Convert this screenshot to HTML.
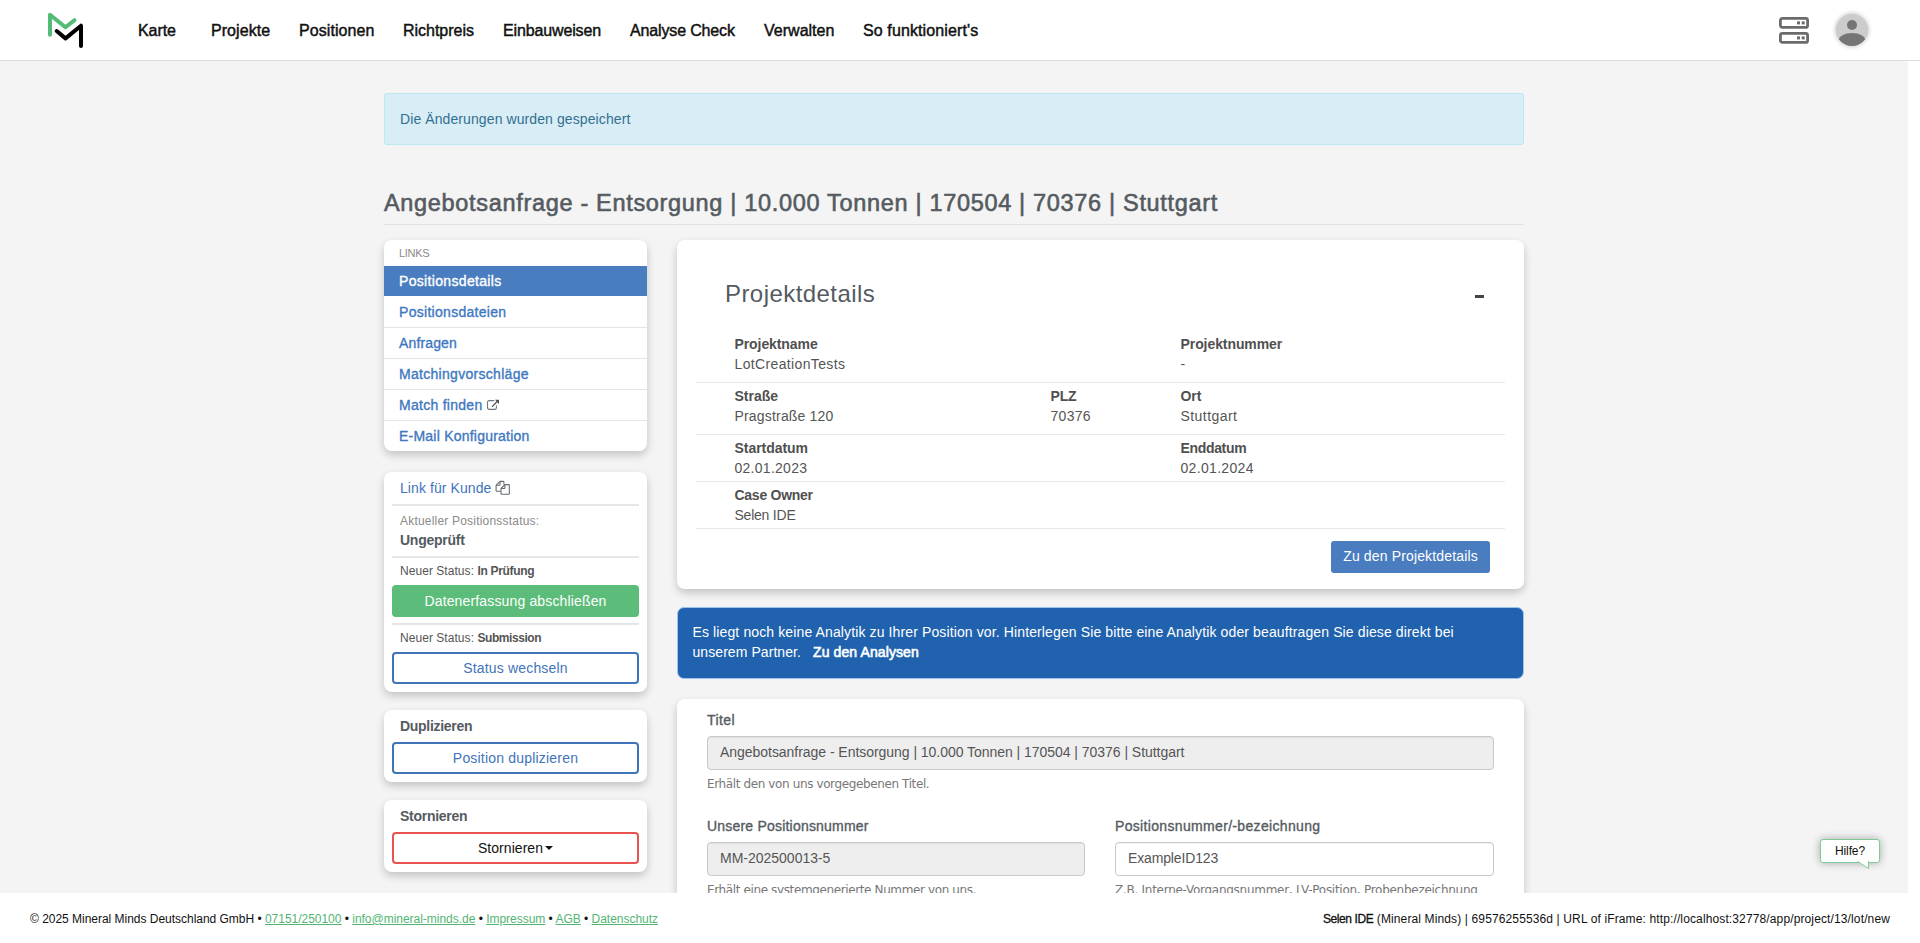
<!DOCTYPE html>
<html lang="de">
<head>
<meta charset="utf-8">
<title>Angebotsanfrage - Entsorgung | 10.000 Tonnen | 170504 | 70376 | Stuttgart</title>
<style>
*{box-sizing:border-box;margin:0;padding:0}
html,body{width:1920px;height:943px;overflow:hidden;background:#fff}
body{font-family:"Liberation Sans",Arial,sans-serif;font-size:14px;color:#555;position:relative}
a{text-decoration:none;color:inherit}
#stage{position:absolute;left:0;top:0;width:1908px;height:893px;background:#f4f4f4;overflow:hidden}
/* header */
#hdr{position:absolute;left:0;top:0;width:1920px;height:61px;background:#fff;border-bottom:1px solid #dcdcdc;z-index:5}
#hdr .logo{position:absolute;left:44px;top:10px}
#hdr nav a{position:absolute;top:21px;height:20px;line-height:20px;font-size:16px;font-weight:normal;-webkit-text-stroke:0.45px #111;color:#111;white-space:nowrap}
#hdr .srv{position:absolute;left:1777px;top:15px}
#hdr .ava{position:absolute;left:1836px;top:14px;width:32px;height:32px;border-radius:50%;background:#ccc;overflow:hidden;box-shadow:0 0 5px rgba(0,0,0,.3)}
/* alert */
.alert{position:absolute;left:384px;top:93px;width:1140px;height:52px;background:#d9edf7;border:1px solid #bce8f1;border-radius:3px;color:#31708f;font-size:14px;line-height:50px;padding-left:15px}
h1.ttl{position:absolute;left:384px;top:186px;width:1140px;height:39px;border-bottom:1px solid #e2e2e2;font-size:23.5px;line-height:34px;font-weight:normal;-webkit-text-stroke:0.6px #555b61;color:#555b61;white-space:nowrap}
.card{position:absolute;background:#fff;border-radius:8px;box-shadow:0 4px 8px 0 rgba(0,0,0,.2)}
/* left */
#links{left:384px;top:240px;width:263px;height:211px;overflow:hidden}
#links .cap{height:26px;line-height:27px;padding-left:15px;font-size:11px;color:#8a8a8a;letter-spacing:.1px}
#links a{display:block;height:31px;line-height:30px;padding-left:15px;font-size:14px;font-weight:normal;-webkit-text-stroke:0.35px;color:#4078c0;border-top:1px solid #e4e4e4}
#links a.act{background:#4a7dbf;color:#fff;border-top:0;height:30px;line-height:30px}
#links a.act + a{border-top-color:#fff}
#status{left:384px;top:472px;width:263px;height:220px}
#dup{left:384px;top:710px;width:263px;height:72px}
#sto{left:384px;top:800px;width:263px;height:72px}
.hr{position:absolute;left:8px;width:247px;height:2px;background:#e6e6e6}
.abs{position:absolute;white-space:nowrap}
.btn{position:absolute;left:8px;width:247px;height:32px;border-radius:4px;text-align:center;font-size:14px;line-height:28px;white-space:nowrap}
.btn.green{background:#5bbd79;color:#fff;line-height:32px}
.btn.ob{border:2px solid #3f74ba;color:#3f74ba;background:#fff}
.btn.or{border:2px solid #ea5250;color:#111;background:#fff}
/* right */
#proj{left:677px;top:240px;width:847px;height:349px}
#proj h2{position:absolute;left:48px;top:37px;font-size:24px;font-weight:normal;color:#555b61;line-height:34px;white-space:nowrap}
#proj .minus{position:absolute;left:798px;top:55px;width:8.600px;height:3px;background:#454545}
#proj .row{position:absolute;left:19px;width:809px;border-bottom:1px solid #e8e8e8}
#proj .f{position:absolute;font-size:14px;line-height:20px;color:#555;white-space:nowrap}
#proj .f b{display:block;color:#505050}
#proj .go{position:absolute;left:654px;top:301px;width:159px;height:32px;border-radius:3px;background:#4a7dbf;color:#fff;font-size:14px;line-height:31px;text-align:center;white-space:nowrap}
#info{position:absolute;left:677px;top:607px;width:847px;height:72px;background:#2062ae;border:1px solid #9cc4ee;border-radius:7px;color:#fff;font-size:14px;line-height:20px;padding:14px 14.500px}
#form{left:677px;top:699px;width:847px;height:300px}
#form label{position:absolute;font-size:14px;font-weight:normal;-webkit-text-stroke:0.35px;color:#555b61;line-height:20px;white-space:nowrap}
#form .inp{position:absolute;height:34px;border:1px solid #c9c9c9;border-radius:4px;background:#fff;padding-left:12px;font-size:14px;line-height:31px;color:#555;white-space:nowrap;box-shadow:inset 0 1px 1px rgba(0,0,0,.06)}
#form .inp.dis{background:#eee}
#form .help{position:absolute;font-size:12px;line-height:18px;color:#777;white-space:nowrap;font-family:"DejaVu Sans","Liberation Sans",sans-serif}
/* help bubble */
#hilfe{position:absolute;left:1820px;top:839px;width:60px;height:24px;background:#fff;border:1px solid #7fcb98;border-radius:3px;font-size:12px;line-height:22px;text-align:center;color:#111;box-shadow:0 0 9px rgba(0,0,0,.32)}
#hilfe svg{position:absolute;left:36px;top:21px}
/* footer */
#ftr{position:absolute;left:0;top:893px;width:1920px;height:50px;background:#fff;font-size:12px;line-height:16px;color:#111}
#ftr .l{position:absolute;left:30px;top:18px;white-space:nowrap}
#ftr .r{position:absolute;right:30px;top:18px;white-space:nowrap}
#ftr a{color:#52b574;text-decoration:underline}
</style>
</head>
<body>
<div id="stage">
  <div class="alert"><span style="letter-spacing:0.095px">Die Änderungen wurden gespeichert</span></div>
  <h1 class="ttl" style="letter-spacing:0.679px">Angebotsanfrage - Entsorgung | 10.000 Tonnen | 170504 | 70376 | Stuttgart</h1>

  <div class="card" id="links">
    <div class="cap"><span style="letter-spacing:-0.299px">LINKS</span></div>
    <a class="act" href="#"><span style="letter-spacing:0.332px">Positionsdetails</span></a>
    <a href="#"><span style="letter-spacing:0.291px">Positionsdateien</span></a>
    <a href="#"><span style="letter-spacing:0.146px">Anfragen</span></a>
    <a href="#"><span style="letter-spacing:0.294px">Matchingvorschläge</span></a>
    <a href="#" style="position:relative"><span style="letter-spacing:0.277px">Match finden</span><svg width="14" height="12" viewBox="0 0 14 12" style="position:absolute;left:102px;top:9px"><path d="M7.900 1.600H3.200a1.700 1.700 0 0 0-1.700 1.700V8.700a1.700 1.700 0 0 0 1.700 1.700H8.700a1.700 1.700 0 0 0 1.700-1.700V6.800" fill="none" stroke="#70767c" stroke-width="1.100" stroke-linecap="round"/><path d="M6.400 7.400L12 1.700" stroke="#4a5056" stroke-width="1.300" stroke-linecap="round"/><path d="M9 .800h4v4.200z" fill="#4a5056"/></svg></a>
    <a href="#"><span style="letter-spacing:0.227px">E-Mail Konfiguration</span></a>
  </div>

  <div class="card" id="status">
    <a class="abs" href="#" style="left:16px;top:6px;font-size:14px;line-height:20px;color:#3f74ba"><span style="letter-spacing:0.079px">Link für Kunde</span><svg width="16" height="16" viewBox="0 0 16 16" style="position:absolute;left:95px;top:2px"><g fill="none" stroke="#666c72" stroke-width="1.100" stroke-linejoin="round"><path d="M8.900 4.500V2a.6.600 0 0 0-.6-.6H5L1.100 5.300V10.600a.6.600 0 0 0 .6.600H5.600"/><path d="M5 1.400V4.700a.6.600 0 0 1-.6.600H1.100"/><path d="M9.900 4.600H13.700a.6.600 0 0 1 .6.600V13.700a.6.600 0 0 1-.6.600H6.600a.6.600 0 0 1-.6-.6V8.500z" fill="#fff"/><path d="M9.900 4.600V7.900a.6.600 0 0 1-.6.600H6"/></g></svg></a>
    <div class="hr" style="top:32px"></div>
    <div class="abs" style="left:16px;top:41px;font-size:12px;line-height:16px;color:#8a8a8a;letter-spacing:0.201px">Aktueller Positionsstatus:</div>
    <div class="abs" style="left:16px;top:58px;font-size:14px;line-height:20px;font-weight:bold;color:#555b61;letter-spacing:-0.243px">Ungeprüft</div>
    <div class="hr" style="top:84px"></div>
    <div class="abs" style="left:16px;top:91px;font-size:12px;line-height:16px;color:#555"><span style="letter-spacing:0.049px">Neuer Status: </span><b style="letter-spacing:-0.320px">In Prüfung</b></div>
    <a class="btn green" href="#" style="top:113px;letter-spacing:0.149px">Datenerfassung abschließen</a>
    <div class="hr" style="top:151px"></div>
    <div class="abs" style="left:16px;top:158px;font-size:12px;line-height:16px;color:#555"><span style="letter-spacing:0.049px">Neuer Status: </span><b style="letter-spacing:-0.432px">Submission</b></div>
    <a class="btn ob" href="#" style="top:180px;letter-spacing:0.163px">Status wechseln</a>
  </div>

  <div class="card" id="dup">
    <div class="abs" style="left:16px;top:6px;font-size:14px;line-height:20px;font-weight:bold;color:#555b61;letter-spacing:-0.288px">Duplizieren</div>
    <a class="btn ob" href="#" style="top:32px;letter-spacing:0.195px">Position duplizieren</a>
  </div>

  <div class="card" id="sto">
    <div class="abs" style="left:16px;top:6px;font-size:14px;line-height:20px;font-weight:bold;color:#555b61;letter-spacing:-0.272px">Stornieren</div>
    <a class="btn or" href="#" style="top:32px"><span style="letter-spacing:0.041px">Stornieren</span><span style="display:inline-block;width:0;height:0;border-left:4px solid transparent;border-right:4px solid transparent;border-top:4px solid #111;margin-left:2px;vertical-align:3px"></span></a>
  </div>

  <div class="card" id="proj">
    <h2 style="letter-spacing:0.437px">Projektdetails</h2>
    <div class="minus"></div>
    <div class="row" style="top:94px;height:49px"></div>
    <div class="row" style="top:143px;height:52px"></div>
    <div class="row" style="top:195px;height:47px"></div>
    <div class="row" style="top:242px;height:47px"></div>
    <div class="f" style="left:57.500px;top:94px"><b style="letter-spacing:-0.086px">Projektname</b><span style="letter-spacing:0.359px">LotCreationTests</span></div>
    <div class="f" style="left:503.500px;top:94px"><b style="letter-spacing:-0.077px">Projektnummer</b>-</div>
    <div class="f" style="left:57.500px;top:146px"><b style="letter-spacing:0.004px">Straße</b><span style="letter-spacing:0.179px">Pragstraße 120</span></div>
    <div class="f" style="left:373.500px;top:146px"><b style="letter-spacing:-0.184px">PLZ</b><span style="letter-spacing:0.292px">70376</span></div>
    <div class="f" style="left:503.500px;top:146px"><b style="letter-spacing:-0.033px">Ort</b><span style="letter-spacing:0.431px">Stuttgart</span></div>
    <div class="f" style="left:57.500px;top:198px"><b style="letter-spacing:-0.041px">Startdatum</b><span style="letter-spacing:0.272px">02.01.2023</span></div>
    <div class="f" style="left:503.500px;top:198px"><b style="letter-spacing:-0.332px">Enddatum</b><span style="letter-spacing:0.322px">02.01.2024</span></div>
    <div class="f" style="left:57.500px;top:245px"><b style="letter-spacing:-0.264px">Case Owner</b><span style="letter-spacing:-0.227px">Selen IDE</span></div>
    <a class="go" href="#" style="letter-spacing:0.146px">Zu den Projektdetails</a>
  </div>

  <div id="info"><span style="letter-spacing:0.120px">Es liegt noch keine Analytik zu Ihrer Position vor. Hinterlegen Sie bitte eine Analytik oder beauftragen Sie diese direkt bei</span><br><span style="letter-spacing:0.069px">unserem Partner.</span><b style="font-weight:normal;-webkit-text-stroke:0.6px;margin-left:12px;letter-spacing:0.107px">Zu den Analysen</b></div>

  <div class="card" id="form">
    <label style="left:30px;top:11px;letter-spacing:0.412px">Titel</label>
    <div class="inp dis" style="left:30px;top:37px;width:787px;letter-spacing:-0.040px">Angebotsanfrage - Entsorgung | 10.000 Tonnen | 170504 | 70376 | Stuttgart</div>
    <div class="help" style="left:30px;top:76px;letter-spacing:-0.381px">Erhält den von uns vorgegebenen Titel.</div>
    <label style="left:30px;top:117px;letter-spacing:0.206px">Unsere Positionsnummer</label>
    <div class="inp dis" style="left:30px;top:143px;width:378px;letter-spacing:-0.008px">MM-202500013-5</div>
    <div class="help" style="left:30px;top:182px;letter-spacing:-0.378px">Erhält eine systemgenerierte Nummer von uns.</div>
    <label style="left:438px;top:117px;letter-spacing:0.332px">Positionsnummer/-bezeichnung</label>
    <div class="inp" style="left:438px;top:143px;width:379px;letter-spacing:-0.144px">ExampleID123</div>
    <div class="help" style="left:438px;top:182px;letter-spacing:-0.272px">Z.B. Interne-Vorgangsnummer, LV-Position, Probenbezeichnung</div>
  </div>

  <div id="hilfe"><span style="letter-spacing:-0.131px">Hilfe?</span><svg width="14" height="9" viewBox="0 0 14 9"><path d="M0 0L11.500 7.500V0" fill="#fff" stroke="#7fcb98" stroke-width="1"/><path d="M-1 -0.600H13" stroke="#fff" stroke-width="1.600"/></svg></div>
</div>

<div id="hdr">
  <svg class="logo" width="44" height="42" viewBox="44 10 44 42"><path d="M50 34.800V14.800L65.500 27.300L74.400 20.200" fill="none" stroke="#54bb77" stroke-width="4" stroke-linecap="round" stroke-linejoin="round"/><path d="M56.700 31L65.500 38.400L81 25.700V46" fill="none" stroke="#000" stroke-width="4" stroke-linecap="round" stroke-linejoin="round"/></svg>
  <nav>
    <a href="#" style="left:138px;letter-spacing:-0.090px">Karte</a>
    <a href="#" style="left:211px;letter-spacing:0.062px">Projekte</a>
    <a href="#" style="left:299px;letter-spacing:0.078px">Positionen</a>
    <a href="#" style="left:403px;letter-spacing:-0.024px">Richtpreis</a>
    <a href="#" style="left:503px;letter-spacing:-0.135px">Einbauweisen</a>
    <a href="#" style="left:630px;letter-spacing:-0.148px">Analyse Check</a>
    <a href="#" style="left:764px;letter-spacing:0.015px">Verwalten</a>
    <a href="#" style="left:863px;letter-spacing:0.115px">So funktioniert's</a>
  </nav>
  <svg class="srv" width="34" height="30" viewBox="0 0 34 30"><g fill="none" stroke="#6b6b6b" stroke-width="2.800"><rect x="3.400" y="3.400" width="27.200" height="9" rx="2"/><rect x="3.400" y="18.400" width="27.200" height="9" rx="2"/></g><g fill="#6b6b6b"><rect x="20" y="6.400" width="3" height="3"/><rect x="24.700" y="6.400" width="3" height="3"/><rect x="20" y="21.400" width="3" height="3"/><rect x="24.700" y="21.400" width="3" height="3"/></g></svg>
  <div class="ava"><svg width="32" height="32" viewBox="0 0 32 32"><circle cx="16" cy="11" r="5" fill="#757575"/><ellipse cx="16" cy="27" rx="13.500" ry="8" fill="#757575"/></svg></div>
</div>

<div id="ftr">
  <div class="l" style="letter-spacing:-0.022px">© 2025 Mineral Minds Deutschland GmbH • <a href="#">07151/250100</a> • <a href="#">info@mineral-minds.de</a> • <a href="#">Impressum</a> • <a href="#">AGB</a> • <a href="#">Datenschutz</a></div>
  <div class="r"><b style="font-weight:normal;-webkit-text-stroke:0.3px;letter-spacing:-0.403px">Selen IDE</b><span style="letter-spacing:0.127px"> (Mineral Minds) | 69576255536d | URL of iFrame: http://localhost:32778/app/project/13/lot/new</span></div>
</div>
</body>
</html>
